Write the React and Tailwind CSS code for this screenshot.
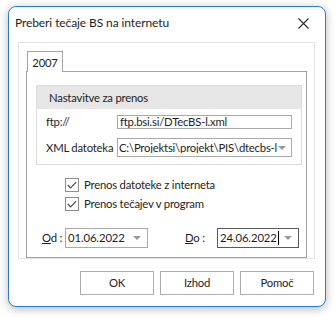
const Arrow = () => (
  <svg width="8" height="4" viewBox="0 0 8 4" className="shrink-0">
    <path d="M0 0 L8 0 L4 4 Z" fill="#9a9a9a" />
  </svg>
);

const Check = () => (
  <div className="w-[14px] h-[14px] border border-[#8f8f8f] bg-white flex items-center justify-center shrink-0">
    <svg width="10" height="8" viewBox="0 0 10 8">
      <path d="M0.8 4 L3.6 6.8 L9.2 1.2" fill="none" stroke="#4a4a4a" strokeWidth="1.2" />
    </svg>
  </div>
);

const DateBox = ({ value, width, focused }) => (
  <div
    className={`h-[20px] ${width} border ${focused ? 'border-[#5a5a5a]' : 'border-[#a9a9a9]'} bg-white flex items-center pl-[2px] pr-[6px] shrink-0`}
  >
    <span className="flex-1 whitespace-nowrap tracking-[-0.1px] flex items-center">
      {value}
      {focused && <span className="inline-block w-px h-[14px] bg-black ml-px" />}
    </span>
    <Arrow />
  </div>
);

const Button = ({ children }) => (
  <div className="w-[74px] h-[24px] border border-[#adadad] bg-white flex items-center justify-center">
    {children}
  </div>
);

export default function App() {
  return (
    <div
      className="w-[335px] h-[317px] bg-white pt-[6px] pl-[8px] text-[11.3px] tracking-[-0.2px] text-[#1e1e1e] leading-none"
      style={{ fontFamily: 'Lato, "Noto Sans", sans-serif' }}
    >
      <div className="w-[318px] h-[301px] border border-[#2b7bd6] rounded-[8px] bg-white shadow-[0_2px_10px_rgba(0,0,0,0.28)]">
        {/* title bar */}
        <div className="h-[35px] flex items-center justify-between pl-[6px] pr-[16px]">
          <span className="text-[12px] tracking-[-0.1px] -mt-[3px]">Preberi tečaje BS na internetu</span>
          <svg width="11" height="11" viewBox="0 0 11 11" className="-mt-[3px]">
            <path d="M0.5 0.5 L10.5 10.5 M10.5 0.5 L0.5 10.5" stroke="#333" strokeWidth="1.2" />
          </svg>
        </div>

        {/* outer panel */}
        <div className="ml-[9px] w-[297px] h-[217px] border border-[#e3e3e3] pt-[8px] pl-[7px]">
          <div className="relative z-10 -mb-px ml-px w-[36px] h-[21px] border border-b-0 border-[#a3a3a3] bg-white flex items-center justify-center">
            <span className="mt-[1px]">2007</span>
          </div>
          <div className="w-[281px] h-[187px] border border-[#a3a3a3] bg-white">
            {/* group */}
            <div className="ml-[9px] mt-[13px] w-[266px] h-[80px] border border-[#dcdcdc]">
              <div className="h-[23px] bg-[#e6e6e6] flex items-center pl-[12px]">Nastavitve za prenos</div>
              <div className="flex items-center mt-[6px] pl-[9px]">
                <span className="w-[71px] shrink-0 whitespace-nowrap">ftp://</span>
                <div className="w-[175px] h-[14px] border border-[#a9a9a9] flex items-center pl-[2px] whitespace-nowrap">
                  ftp.bsi.si/DTecBS-l.xml
                </div>
              </div>
              <div className="flex items-center mt-[9px] pl-[9px]">
                <span className="w-[71px] shrink-0 whitespace-nowrap">XML datoteka</span>
                <div className="w-[175px] h-[19px] border border-[#a9a9a9] flex items-center pl-[1px] pr-[5px]">
                  <span className="flex-1 overflow-hidden whitespace-nowrap">C:\Projektsi\projekt\PIS\dtecbs-l</span>
                  <Arrow />
                </div>
              </div>
            </div>

            {/* checkboxes */}
            <div className="ml-[38px] mt-[13px] flex flex-col gap-[5px]">
              <div className="flex items-center gap-[5px]">
                <Check />
                <span>Prenos datoteke z interneta</span>
              </div>
              <div className="flex items-center gap-[5px]">
                <Check />
                <span>Prenos tečajev v program</span>
              </div>
            </div>

            {/* dates */}
            <div className="ml-[15px] mt-[17px] flex items-center">
              <span className="w-[23px] shrink-0 whitespace-nowrap">
                <span className="underline">O</span>d :
              </span>
              <DateBox value="01.06.2022" width="w-[83px]" />
              <span className="ml-[37px] w-[32px] shrink-0 whitespace-nowrap">
                <span className="underline">D</span>o :
              </span>
              <DateBox value="24.06.2022" width="w-[82px]" focused />
            </div>
          </div>
        </div>

        {/* buttons */}
        <div className="ml-[71px] mt-[12px] flex gap-[6px]">
          <Button>OK</Button>
          <Button>Izhod</Button>
          <Button>Pomoč</Button>
        </div>
      </div>
    </div>
  );
}
